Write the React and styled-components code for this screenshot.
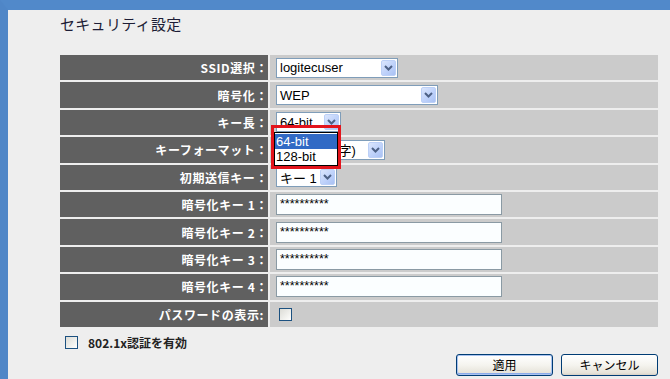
import React from "react"
import styled, { createGlobalStyle } from "styled-components"

const GlobalStyle = createGlobalStyle`
  html, body {
    margin: 0;
    padding: 0;
    background: #eeeeee;
  }
`

const Window = styled.div`
  box-sizing: border-box;
  height: 379px;
  border-top: 10px solid #5189ca;
  border-left: 8px solid #4f86c7;
  background: #eeeeee;
  padding: 0 12px 0 52px;
  font-family: "Noto Sans CJK JP", "Liberation Sans", sans-serif;
  overflow: hidden;
`

const Title = styled.h1`
  margin: 4px 0 21px;
  height: 20px;
  line-height: 20px;
  font-size: 15px;
  font-weight: 400;
  color: #1d1d36;
  letter-spacing: 0.3px;
`

const FormTable = styled.div`
  display: grid;
  grid-template-columns: 208px 1fr;
  grid-auto-rows: 25.4px;
  column-gap: 2px;
  row-gap: 2px;
`

const Label = styled.div`
  background: #606060;
  color: #ffffff;
  font-size: 12px;
  font-weight: 700;
  letter-spacing: 0.6px;
  display: flex;
  align-items: center;
  justify-content: flex-end;
  padding-right: ${p => (p.$tight ? "4px" : "0")};
`

const Cell = styled.div`
  background: #cbcbcb;
  display: flex;
  align-items: center;
  padding-left: 6px;
`

const SelectBox = styled.div`
  position: relative;
  box-sizing: border-box;
  width: ${p => p.$w}px;
  height: 20px;
  border: 1px solid #7f9db9;
  background: #ffffff;
  display: flex;
  align-items: center;
  padding: 1px;
`

const SelectText = styled.span`
  flex: 1;
  padding-left: 2px;
  font-family: "Liberation Sans", "Noto Sans CJK JP", sans-serif;
  font-size: 13px;
  color: #000;
  white-space: nowrap;
  overflow: hidden;
`

const ArrowBtn = styled.span`
  width: 15px;
  height: 16px;
  flex-shrink: 0;
  box-sizing: border-box;
  border: 1px solid #bcd0f7;
  border-radius: 2px;
  background: linear-gradient(135deg, #dbe6fd 0%, #bcd0fa 60%, #a9c1f3 100%);
  display: flex;
  align-items: center;
  justify-content: center;
`

const Chevron = () => (
  <svg width="9" height="6" viewBox="0 0 9 6">
    <path d="M1 1 L4.5 4.5 L8 1" fill="none" stroke="#4d6185" strokeWidth="2" />
  </svg>
)

const Marker = styled.div`
  position: absolute;
  left: -6px;
  top: 12px;
  width: 70px;
  height: 44px;
  box-sizing: border-box;
  border: 3px solid #e3141c;
  z-index: 2;
`

const OptionList = styled.div`
  position: absolute;
  left: 0;
  top: 4px;
  width: 64px;
  box-sizing: border-box;
  border: 1px solid #000;
  background: #fff;
  padding: 1px 0;
`

const Option = styled.div`
  height: 15px;
  line-height: 15px;
  padding-left: 1px;
  font-family: "Liberation Sans", sans-serif;
  font-size: 13px;
  color: ${p => (p.$active ? "#fff" : "#000")};
  background: ${p => (p.$active ? "#316ac5" : "transparent")};
`

const KeyField = styled.div`
  box-sizing: border-box;
  width: 226px;
  height: 21px;
  border: 1px solid #8a9aa4;
  background: #fbfeff;
  padding: 2px 0 0 3px;
  font-family: "Liberation Sans", sans-serif;
  font-size: 12.5px;
  line-height: 14px;
  color: #000;
`

const Check = styled.span`
  display: inline-block;
  box-sizing: border-box;
  width: 13px;
  height: 13px;
  border: 1px solid #1c5180;
  background: linear-gradient(135deg, #dcdcd6 0%, #f4f4f1 70%, #ffffff 100%);
  margin-left: ${p => p.$ml || 0}px;
`

const CheckRow = styled.div`
  display: flex;
  align-items: center;
  gap: 10px;
  margin-top: 9px;
  padding-left: 5px;
  height: 13px;
  font-size: 12px;
  font-weight: 700;
  color: #222;
`

const ButtonRow = styled.div`
  display: flex;
  justify-content: flex-end;
  gap: 8px;
  margin-top: 5px;
`

const Button = styled.button`
  box-sizing: border-box;
  width: ${p => p.$w}px;
  height: 22px;
  border: 1px solid #003c74;
  border-radius: 3px;
  background: linear-gradient(#ffffff 0%, #f5f4ef 50%, #e6e3d9 90%, #d6d0c5 100%);
  box-shadow: ${p => (p.$default ? "inset 0 0 0 1px #a9c2ef, inset 0 -1px 0 1px #8aaaea" : "none")};
  font-family: "Noto Sans CJK JP", sans-serif;
  font-size: 12px;
  color: #000;
  padding: 0;
  line-height: 18px;
`

const Select = ({ width, children, overlay }) => (
  <SelectBox $w={width}>
    <SelectText>{children}</SelectText>
    <ArrowBtn>
      <Chevron />
    </ArrowBtn>
    {overlay}
  </SelectBox>
)

const keys = ["1", "2", "3", "4"]

export default function App() {
  return (
    <>
      <GlobalStyle />
      <Window>
        <Title>セキュリティ設定</Title>
        <FormTable>
          <Label>SSID選択：</Label>
          <Cell>
            <Select width={122}>logitecuser</Select>
          </Cell>

          <Label>暗号化：</Label>
          <Cell>
            <Select width={162}>WEP</Select>
          </Cell>

          <Label>キー長：</Label>
          <Cell>
            <Select
              width={65}
              overlay={
                <Marker>
                  <OptionList>
                    <Option $active>64-bit</Option>
                    <Option>128-bit</Option>
                  </OptionList>
                </Marker>
              }
            >
              64-bit
            </Select>
          </Cell>

          <Label>キーフォーマット：</Label>
          <Cell>
            <Select width={109}>ASCII(5文字)</Select>
          </Cell>

          <Label>初期送信キー：</Label>
          <Cell>
            <Select width={61}>キー 1</Select>
          </Cell>

          {keys.map(k => (
            <React.Fragment key={k}>
              <Label>暗号化キー {k}：</Label>
              <Cell>
                <KeyField>**********</KeyField>
              </Cell>
            </React.Fragment>
          ))}

          <Label $tight>パスワードの表示:</Label>
          <Cell>
            <Check $ml={3} />
          </Cell>
        </FormTable>

        <CheckRow>
          <Check />
          <span>802.1x認証を有効</span>
        </CheckRow>

        <ButtonRow>
          <Button $w={97} $default>適用</Button>
          <Button $w={97}>キャンセル</Button>
        </ButtonRow>
      </Window>
    </>
  )
}
